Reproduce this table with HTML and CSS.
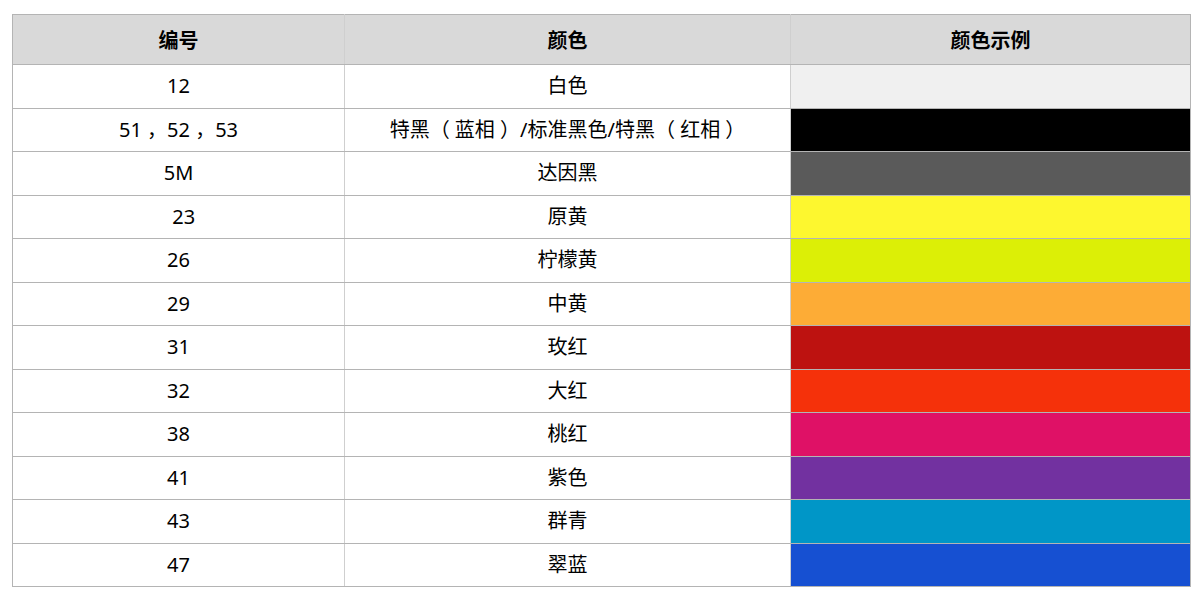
FILE: index.html
```html
<!DOCTYPE html>
<html lang="zh-CN">
<head>
<meta charset="utf-8">
<title>颜色对照表</title>
<link rel="stylesheet" href="styles.css">
</head>
<body>
<table class="color-table">
  <colgroup>
    <col class="col-code">
    <col class="col-name">
    <col class="col-swatch">
  </colgroup>
  <thead>
    <tr><th>编号</th><th>颜色</th><th>颜色示例</th></tr>
  </thead>
  <tbody>
    <tr><td>12</td><td>白色</td><td class="swatch" style="background:#f0f0f0"></td></tr>
    <tr><td>51 ，52 ，53</td><td>特黑（ 蓝相 ）/标准黑色/特黑（ 红相 ）</td><td class="swatch" style="background:#000000"></td></tr>
    <tr><td>5M</td><td>达因黑</td><td class="swatch" style="background:#5a5a5a"></td></tr>
    <tr><td>&nbsp;&nbsp;23</td><td>原黄</td><td class="swatch" style="background:#fdf72f"></td></tr>
    <tr><td>26</td><td>柠檬黄</td><td class="swatch" style="background:#dcef06"></td></tr>
    <tr><td>29</td><td>中黄</td><td class="swatch" style="background:#fdac36"></td></tr>
    <tr><td>31</td><td>玫红</td><td class="swatch" style="background:#bd1210"></td></tr>
    <tr><td>32</td><td>大红</td><td class="swatch" style="background:#f5310a"></td></tr>
    <tr><td>38</td><td>桃红</td><td class="swatch" style="background:#df1166"></td></tr>
    <tr><td>41</td><td>紫色</td><td class="swatch" style="background:#7231a0"></td></tr>
    <tr><td>43</td><td>群青</td><td class="swatch" style="background:#0096c7"></td></tr>
    <tr><td>47</td><td>翠蓝</td><td class="swatch" style="background:#1650d2"></td></tr>
  </tbody>
</table>
</body>
</html>
```
FILE: styles.css
```css
html, body {
  margin: 0;
  padding: 0;
  background: #ffffff;
}

body {
  padding: 14px 0 0 12px;
  font-family: "Noto Sans", "Noto Sans CJK SC", sans-serif;
  color: #000000;
}

.color-table {
  border-collapse: collapse;
  table-layout: fixed;
  width: 1178px;
}

.col-code { width: 332px; }
.col-name { width: 446px; }
.col-swatch { width: 400px; }

.color-table th,
.color-table td {
  border-top: 1px solid #b4b4b4;
  border-bottom: 1px solid #b4b4b4;
  border-left: 1px solid #cfcfcf;
  border-right: 1px solid #cfcfcf;
  text-align: center;
  vertical-align: middle;
  padding: 0;
  font-size: 20px;
  line-height: 24px;
  white-space: pre;
}

.color-table th {
  height: 49px;
  background: #d9d9d9;
  font-weight: bold;
  color: #000000;
  font-family: "Noto Sans CJK SC", sans-serif;
}

.color-table thead th:first-child { border-left-color: #b4b4b4; }
.color-table thead th:last-child { border-right-color: #b4b4b4; }

.color-table td {
  height: 42.5px;
}

.color-table td:first-child { border-left-color: #b4b4b4; }

.color-table td.swatch {
  border-left-color: #b4b4b4;
  border-right-color: #b4b4b4;
}
```
